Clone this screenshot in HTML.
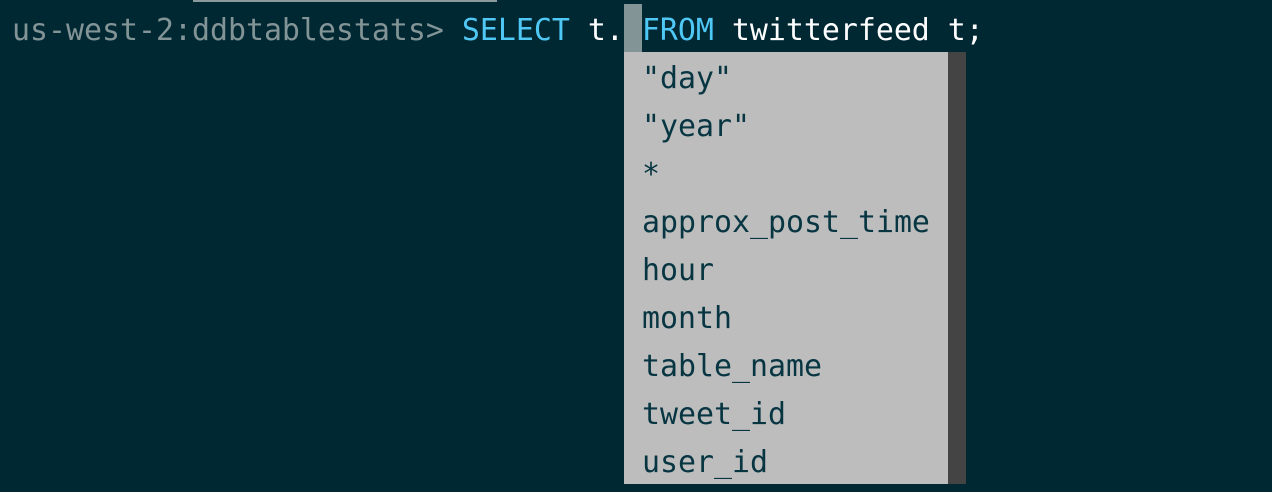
<!DOCTYPE html>
<html><head><style>
html,body{margin:0;padding:0;width:1272px;height:492px;overflow:hidden;background:#002833;}
body{position:relative;font-family:"DejaVu Sans Mono","Liberation Mono",monospace;font-size:29.9px;}
.line{position:absolute;left:12px;top:7px;height:48px;line-height:48px;white-space:pre;color:#fff;}
.p{color:#839496}.k{color:#4fc8f5}
.cur{position:absolute;left:624px;top:4px;width:18px;height:48px;background:#839496;}
.topl{position:absolute;left:193px;top:0;width:304px;height:2px;background:#8a9a9c;}
.pop{position:absolute;left:624px;top:52px;width:324px;height:432px;background:#bdbdbd;overflow:hidden;}
.sb{position:absolute;left:948px;top:52px;width:18px;height:432px;background:#444;}
.pop div{position:relative;top:3px;height:48px;line-height:48px;padding-left:18px;color:#073642;white-space:pre;}
</style></head><body>
<div class="topl"></div>
<div class="cur"></div>
<div class="line"><span class="p">us-west-2:ddbtablestats&gt; </span><span class="k">SELECT</span> t. <span class="k">FROM</span> twitterfeed t;</div>
<div class="pop">
<div>"day"</div><div>"year"</div><div>*</div><div>approx_post_time</div><div>hour</div><div>month</div><div>table_name</div><div>tweet_id</div><div>user_id</div>
</div>
<div class="sb"></div>
</body></html>
